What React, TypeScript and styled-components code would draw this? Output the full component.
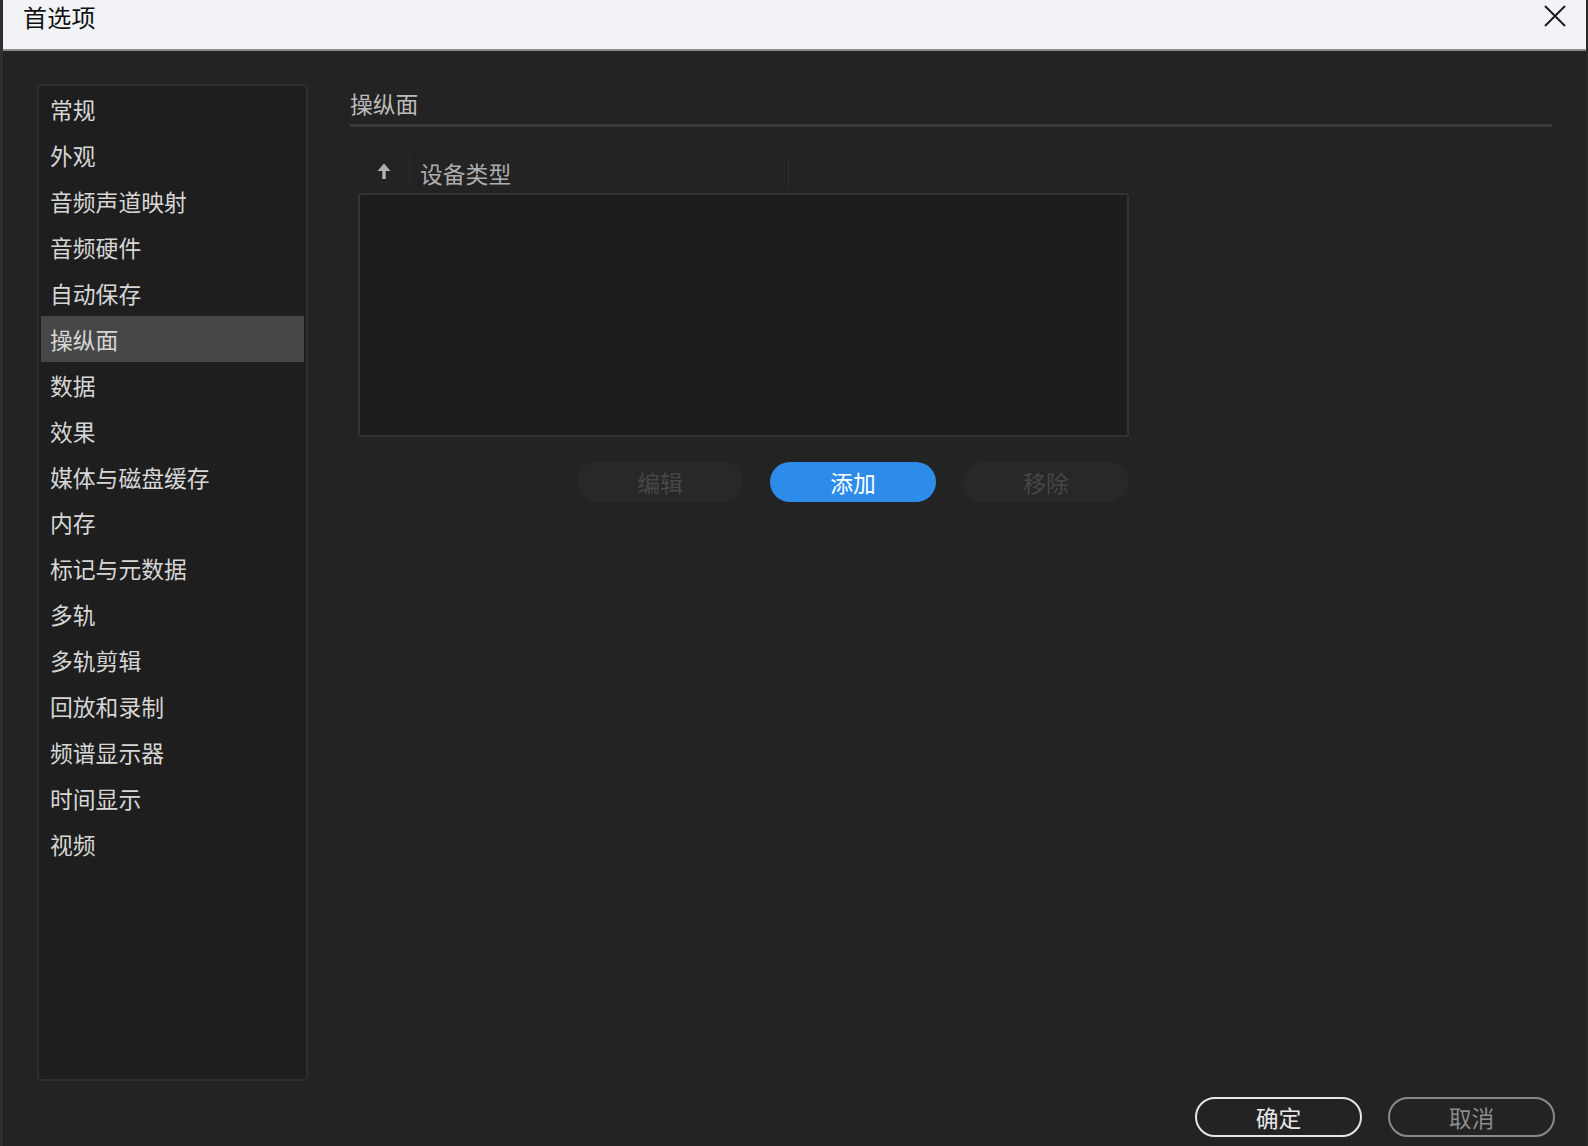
import React from "react";
import styled, { createGlobalStyle } from "styled-components";

const GlobalStyle = createGlobalStyle`
  html, body {
    margin: 0;
    padding: 0;
    background: #232323;
  }
  * { box-sizing: border-box; }
`;

const FONT = `"Noto Sans CJK SC", "Noto Sans", "Liberation Sans", sans-serif`;

const Window = styled.div`
  width: 1588px;
  height: 1146px;
  display: flex;
  flex-direction: column;
  background: #232323;
  border-left: 3px solid #2f2f2f;
  border-right: 2px solid #2a2a2a;
  font-family: ${FONT};
  overflow: hidden;
`;

const TitleBar = styled.div`
  height: 51px;
  flex-shrink: 0;
  display: flex;
  align-items: center;
  justify-content: space-between;
  background: #f2f3f7;
  border-bottom: 2px solid #8c8c8c;
  padding: 0 18px 2px 20px;
`;

const Title = styled.div`
  font-size: 24px;
  color: #111;
  margin-top: -14px;
  letter-spacing: 0.3px;
`;

const CloseButton = styled.div`
  width: 26px;
  height: 26px;
  display: flex;
  align-items: center;
  justify-content: center;
  margin-top: -16px;
`;

const Body = styled.div`
  flex: 1;
  display: flex;
  flex-direction: column;
  padding: 33px 34px 10px 34px;
`;

const Content = styled.div`
  flex: 1;
  display: flex;
  gap: 42px;
`;

const Sidebar = styled.div`
  width: 271px;
  height: 997px;
  background: #1e1e1e;
  border: 2px solid #2e2e2e;
  border-radius: 4px;
  padding: 1px 2px;
  display: flex;
  flex-direction: column;
`;

const NavItem = styled.div<{ $active?: boolean }>`
  height: 45.9px;
  display: flex;
  align-items: center;
  padding-left: 9px;
  font-size: 22.8px;
  color: #d6d6d6;
  background: ${(p) => (p.$active ? "#474747" : "transparent")};
`;

const Main = styled.div`
  flex: 1;
  display: flex;
  flex-direction: column;
`;

const Heading = styled.div`
  font-size: 22.8px;
  color: #bcbcbc;
  line-height: 28px;
  margin-top: 6px;
  padding-bottom: 6px;
  border-bottom: 3px solid #3a3a3a;
`;

const TableHeader = styled.div`
  display: flex;
  align-items: center;
  height: 40px;
  margin-top: 26px;
  margin-left: 8px;
`;

const SortCell = styled.div`
  width: 52px;
  height: 30px;
  display: flex;
  align-items: center;
  justify-content: center;
  border-right: 1px solid #2c2c2c;
  margin-top: -4px;
`;

const HeaderCell = styled.div`
  width: 379px;
  height: 30px;
  display: flex;
  align-items: center;
  padding-left: 10px;
  font-size: 22.8px;
  color: #adadad;
  border-right: 1px solid #2c2c2c;
`;

const ListBox = styled.div`
  width: 771px;
  height: 244px;
  margin-left: 8px;
  background: #1d1d1d;
  border: 2px solid #333;
  border-radius: 3px;
`;

const ActionRow = styled.div`
  width: 771px;
  margin-left: 8px;
  margin-top: 25px;
  display: flex;
  justify-content: flex-end;
  gap: 27px;
`;

const PillButton = styled.div<{ $primary?: boolean }>`
  width: 166px;
  height: 40px;
  border-radius: 20px;
  display: flex;
  align-items: center;
  justify-content: center;
  font-size: 22.8px;
  background: ${(p) => (p.$primary ? "#2d8be9" : "#282828")};
  color: ${(p) => (p.$primary ? "#ffffff" : "#474747")};
`;

const Footer = styled.div`
  display: flex;
  justify-content: flex-end;
  gap: 26px;
  margin-top: 16px;
  margin-right: -3px;
`;

const OutlineButton = styled.div<{ $muted?: boolean }>`
  width: 167px;
  height: 40px;
  border-radius: 20px;
  display: flex;
  align-items: center;
  justify-content: center;
  font-size: 22.8px;
  border: 2px solid ${(p) => (p.$muted ? "#8a8a8a" : "#e6e6e6")};
  color: ${(p) => (p.$muted ? "#8c8c8c" : "#e8e8e8")};
`;

const navItems = [
  "常规",
  "外观",
  "音频声道映射",
  "音频硬件",
  "自动保存",
  "操纵面",
  "数据",
  "效果",
  "媒体与磁盘缓存",
  "内存",
  "标记与元数据",
  "多轨",
  "多轨剪辑",
  "回放和录制",
  "频谱显示器",
  "时间显示",
  "视频",
];

export default function App() {
  return (
    <>
      <GlobalStyle />
      <Window>
        <TitleBar>
          <Title>首选项</Title>
          <CloseButton>
            <svg width="24" height="24" viewBox="0 0 24 24">
              <path d="M2 2 L22 22 M22 2 L2 22" stroke="#1a1a1a" strokeWidth="2" />
            </svg>
          </CloseButton>
        </TitleBar>
        <Body>
          <Content>
            <Sidebar>
              {navItems.map((item) => (
                <NavItem key={item} $active={item === "操纵面"}>
                  {item}
                </NavItem>
              ))}
            </Sidebar>
            <Main>
              <Heading>操纵面</Heading>
              <TableHeader>
                <SortCell>
                  <svg width="16" height="18" viewBox="0 0 16 18">
                    <path d="M8 6 L8 17" stroke="#b0b0b0" strokeWidth="3.5" />
                    <path d="M1.5 9 L8 1.5 L14.5 9 Z" fill="#b0b0b0" />
                  </svg>
                </SortCell>
                <HeaderCell>设备类型</HeaderCell>
              </TableHeader>
              <ListBox />
              <ActionRow>
                <PillButton>编辑</PillButton>
                <PillButton $primary>添加</PillButton>
                <PillButton>移除</PillButton>
              </ActionRow>
            </Main>
          </Content>
          <Footer>
            <OutlineButton>确定</OutlineButton>
            <OutlineButton $muted>取消</OutlineButton>
          </Footer>
        </Body>
      </Window>
    </>
  );
}
